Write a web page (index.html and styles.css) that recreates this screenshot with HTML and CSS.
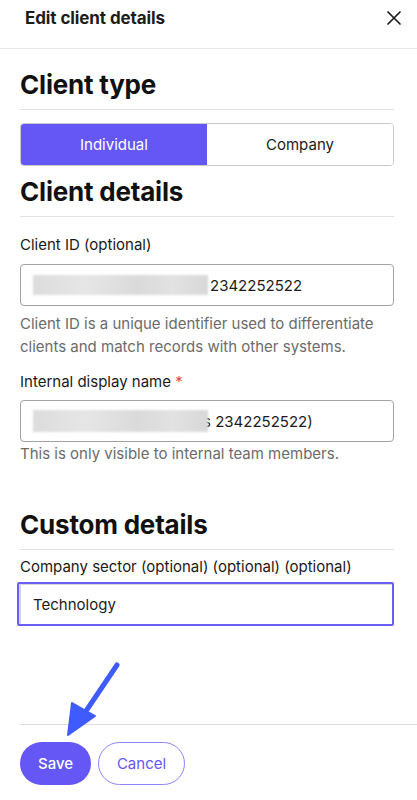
FILE: index.html
```html
<!DOCTYPE html>
<html lang="en">

<head>
    <meta charset="UTF-8">
    <title>Edit client details</title>
    <link rel="stylesheet" href="styles.css">
</head>

<body>
    <div class="panel">
        <div class="panel-header">
            <span class="panel-title">Edit client details</span>
            <button class="close-btn" type="button" aria-label="Close">
                <svg width="14" height="14" viewBox="0 0 14 14">
                    <path d="M1 1 L13 13 M13 1 L1 13" stroke="#1c1c1c" stroke-width="1.7" fill="none" stroke-linecap="round" />
                </svg>
            </button>
        </div>

        <div class="panel-body">
            <h2 class="section-title first">Client type</h2>
            <div class="segmented">
                <button class="seg active" type="button">Individual</button>
                <button class="seg" type="button">Company</button>
            </div>

            <h2 class="section-title tight">Client details</h2>

            <label class="field-label first-label">Client ID (optional)</label>
            <div class="text-input">
                <span class="redact"></span><span>2342252522</span>
            </div>
            <div class="hint">Client ID is a unique identifier used to differentiate clients and match records with other systems.</div>

            <label class="field-label second-label">Internal display name <span class="req">*</span></label>
            <div class="text-input second-input">
                <span class="redact overlap"></span><span>s 2342252522)</span>
            </div>
            <div class="hint flush">This is only visible to internal team members.</div>

            <h2 class="section-title spaced">Custom details</h2>

            <label class="field-label sector-label">Company sector (optional) (optional) (optional)</label>
            <div class="text-input focused">Technology</div>
        </div>

        <div class="panel-footer">
            <button class="btn btn-primary" type="button">Save</button>
            <button class="btn btn-outline" type="button">Cancel</button>
        </div>

        <!-- pointer callout over the save button -->
        <svg class="callout-arrow" width="80" height="100" viewBox="0 0 80 100">
            <path d="M57 10 L22 62" stroke="#3f5bfb" stroke-width="5" stroke-linecap="round" fill="none" />
            <path d="M8 80 L12 48 L35 61 Z" fill="#3f5bfb" stroke="#3f5bfb" stroke-width="2" stroke-linejoin="round" />
        </svg>
    </div>
</body>

</html>
```

FILE: styles.css
```css
body {
    font-family: Inter, 'Noto Sans', Arial, sans-serif;
    margin: 0;
    padding: 0;
    background: #fff;
    color: #1c1c1c;
}

.panel {
    position: relative;
    display: flex;
    flex-direction: column;
    min-height: 100vh;
}

.panel-header {
    box-sizing: border-box;
    height: 49px;
    display: flex;
    justify-content: space-between;
    align-items: center;
    padding: 0 16px 12px 25px;
    border-bottom: 1px solid #e8e8e8;
}

.panel-title {
    font-size: 17px;
    font-weight: 700;
    letter-spacing: -0.1px;
}

.close-btn {
    background: none;
    border: none;
    padding: 0;
    width: 14px;
    height: 14px;
    cursor: pointer;
}

.panel-body {
    padding: 0 23px 0 20px;
}

.section-title {
    font-size: 26px;
    line-height: 32px;
    font-weight: 700;
    letter-spacing: -0.2px;
    margin: 0;
    padding-bottom: 8px;
    border-bottom: 1px solid #e3e3e3;
    color: #111;
}

.section-title.first {
    margin-top: 20px;
}

.section-title.tight {
    margin-top: 10px;
}

.section-title.spaced {
    margin-top: 44px;
}

.segmented {
    display: flex;
    margin-top: 13px;
    height: 43px;
    box-sizing: border-box;
    border: 1px solid #c9c9c9;
    border-radius: 4px;
    overflow: hidden;
}

.seg {
    flex: 1;
    border: none;
    background: #fff;
    font-family: inherit;
    font-size: 15px;
    color: #1c1c1c;
    cursor: pointer;
}

.seg.active {
    background: #6457f5;
    color: #fff;
}

.field-label {
    display: block;
    font-size: 15px;
    line-height: 22px;
    color: #1a1a1a;
}

.first-label {
    margin-top: 17px;
}

.second-label {
    margin-top: 13px;
}

.sector-label {
    margin-top: 6px;
}

.req {
    color: #e5484d;
}

.text-input {
    box-sizing: border-box;
    height: 42px;
    margin-top: 8px;
    display: flex;
    align-items: center;
    padding: 0 12px;
    border: 1px solid #a3a3a3;
    border-radius: 4px;
    font-size: 15px;
    color: #1c1c1c;
}

.second-input {
    margin-top: 7px;
}

.text-input.focused {
    height: 44px;
    margin-top: 4px;
    margin-left: -3px;
    padding-left: 14px;
    border: 2px solid #6a5ff2;
    border-radius: 2px;
    box-shadow: inset 2px 1px 0 #d6d6d6;
}

.redact {
    display: inline-block;
    width: 175px;
    height: 20px;
    margin-right: 2px;
    background: linear-gradient(90deg, #dcdcdc 0%, #e6e6e6 30%, #dadada 60%, #e2e2e2 80%, #d8d8d8 100%);
    filter: blur(1px);
}

.redact.overlap {
    position: relative;
    margin-right: -5px;
    height: 22px;
}

.hint {
    margin-top: 6px;
    font-size: 15px;
    line-height: 23px;
    color: #6b6b6b;
}

.hint.flush {
    margin-top: 0;
}

.panel-footer {
    margin-top: auto;
    margin-left: 20px;
    padding: 17px 0 15px 0;
    border-top: 1px solid #dedede;
    display: flex;
    gap: 7px;
}

.btn {
    box-sizing: border-box;
    height: 43px;
    border-radius: 22px;
    font-family: inherit;
    font-size: 15px;
    cursor: pointer;
}

.btn-primary {
    width: 71px;
    background: #6457f5;
    border: none;
    color: #fff;
    font-weight: 500;
}

.btn-outline {
    width: 87px;
    background: #fff;
    border: 1px solid #8d84f6;
    color: #6457f5;
}

.callout-arrow {
    position: absolute;
    left: 60px;
    top: 655px;
}
```
